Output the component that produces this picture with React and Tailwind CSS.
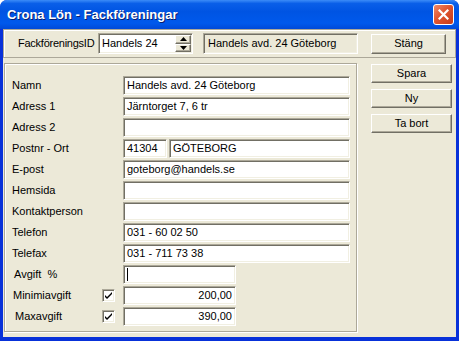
import React from 'react'

const sunken =
  'border border-t-[#ACA899] border-l-[#ACA899] border-r-white border-b-white shadow-[inset_1px_1px_0_#716F64,inset_-1px_-1px_0_#F1EFE2]'
const raised =
  'border border-t-white border-l-white border-r-[#716F64] border-b-[#716F64] shadow-[inset_-1px_-1px_0_#ACA899] bg-[#ECE9D8]'

function Field({ value = '', w, right = false, caret = false }) {
  return (
    <div
      className={`${sunken} bg-white h-[19px] flex items-center px-[3px] ${right ? 'justify-end' : ''}`}
      style={{ width: w }}
    >
      <span className="whitespace-nowrap leading-none">{value}</span>
      {caret && <span className="w-px h-[13px] bg-black" />}
    </div>
  )
}

function Check() {
  return (
    <div className={`${sunken} bg-white w-[13px] h-[13px] flex items-center justify-center`}>
      <svg width="7" height="7" viewBox="0 0 7 7">
        <path d="M0 3 L2 5 L7 0 V2 L2 7 L0 5 Z" fill="#000" />
      </svg>
    </div>
  )
}

function Row({ label, children, labelClass = '' }) {
  return (
    <div className="flex items-center h-[19px]">
      <div className={`w-[111px] ${labelClass}`}>{label}</div>
      {children}
    </div>
  )
}

function Btn({ children, w = 81, h = 19 }) {
  return (
    <div
      className={`${raised} flex items-center justify-center text-black`}
      style={{ width: w, height: h }}
    >
      {children}
    </div>
  )
}

export default function App() {
  return (
    <div
      className="w-[459px] h-[341px] bg-[#0831D9] rounded-t-[7px] flex flex-col text-[11px] text-black"
      style={{ fontFamily: '"Liberation Sans", Arial, sans-serif' }}
    >
      {/* title bar */}
      <div className="h-[29px] rounded-t-[7px] bg-[linear-gradient(180deg,#3C8CF8_0%,#0A5FE8_12%,#0054E3_40%,#0059EC_80%,#0049D8_100%)] flex items-center pl-[7px] pr-[5px]">
        <span className="text-white font-bold text-[13px] [text-shadow:1px_1px_0_#0A1E6E] flex-1">
          Crona Lön - Fackföreningar
        </span>
        <div className="w-[21px] h-[21px] rounded-[3px] border border-white bg-[linear-gradient(135deg,#F08A6A_0%,#E0552F_45%,#C63A17_100%)] flex items-center justify-center">
          <svg width="11" height="11" viewBox="0 0 11 11">
            <path d="M1.5 1.5 L9.5 9.5 M9.5 1.5 L1.5 9.5" stroke="#fff" strokeWidth="2.2" strokeLinecap="square" />
          </svg>
        </div>
      </div>

      {/* body */}
      <div className="flex-1 mx-[3px] mb-[4px] mr-[3px] bg-[#ECE9D8] flex flex-col">
        {/* top panel */}
        <div className="h-[29px] border border-[#ACA899] shadow-[inset_1px_1px_0_#fff] flex items-center pl-[13px]">
          <div className="w-[81px] pl-px tracking-[-0.25px] whitespace-nowrap">FackföreningsID</div>
          <div className={`${sunken} bg-white h-[21px] w-[95px] flex items-center pl-[3px]`}>
            <span className="flex-1">Handels 24</span>
            <div className="flex flex-col w-[16px] h-[17px] mr-px">
              <div className={`${raised} flex-1 flex items-center justify-center`}>
                <svg width="7" height="4" viewBox="0 0 7 4"><path d="M3.5 0 L7 4 H0 Z" fill="#000" /></svg>
              </div>
              <div className={`${raised} flex-1 flex items-center justify-center`}>
                <svg width="7" height="4" viewBox="0 0 7 4"><path d="M0 0 H7 L3.5 4 Z" fill="#000" /></svg>
              </div>
            </div>
          </div>
          <div className={`${sunken} ml-[10px] h-[21px] w-[155px] flex items-center pl-[4px]`}>
            Handels avd. 24 Göteborg
          </div>
          <div className="ml-[13px]">
            <Btn w={75} h={20}>Stäng</Btn>
          </div>
        </div>

        <div className="flex mt-[5px]">
          {/* group box */}
          <div className="ml-px w-[353px] h-[269px] border border-[#ACA899] shadow-[inset_1px_1px_0_#fff,1px_1px_0_#fff] pl-[7px] pt-[12px] flex flex-col gap-[2px]">
            <Row label="Namn"><Field w={227} value="Handels avd. 24 Göteborg" /></Row>
            <Row label="Adress 1"><Field w={227} value="Järntorget 7, 6 tr" /></Row>
            <Row label="Adress 2"><Field w={227} /></Row>
            <Row label="Postnr - Ort">
              <Field w={44} value="41304" />
              <div className="ml-[2px]"><Field w={181} value="GÖTEBORG" /></div>
            </Row>
            <Row label="E-post"><Field w={227} value="goteborg@handels.se" /></Row>
            <Row label="Hemsida"><Field w={227} /></Row>
            <Row label="Kontaktperson"><Field w={227} /></Row>
            <Row label="Telefon"><Field w={227} value="031 - 60 02 50" /></Row>
            <Row label="Telefax"><Field w={227} value="031 - 711 73 38" /></Row>
            <Row label={<span>Avgift&nbsp;&nbsp;%</span>} labelClass="pl-[2px]"><Field w={113} caret /></Row>
            <div className="flex items-center h-[19px]">
              <div className="w-[90px] pl-px">Minimiavgift</div>
              <Check />
              <div className="ml-[8px]"><Field w={113} value="200,00" right /></div>
            </div>
            <div className="flex items-center h-[19px]">
              <div className="w-[90px] pl-[3px]">Maxavgift</div>
              <Check />
              <div className="ml-[8px]"><Field w={113} value="390,00" right /></div>
            </div>
          </div>

          {/* buttons */}
          <div className="ml-[14px] mt-px flex flex-col gap-[6px]">
            <Btn>Spara</Btn>
            <Btn>Ny</Btn>
            <Btn>Ta bort</Btn>
          </div>
        </div>
      </div>
    </div>
  )
}
